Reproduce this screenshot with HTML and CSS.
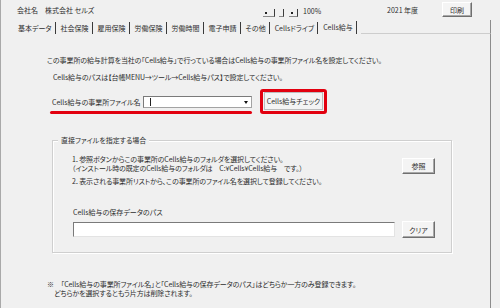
FILE: index.html
```html
<!DOCTYPE html>
<html lang="ja">
<head>
<meta charset="utf-8">
<link rel="stylesheet" href="styles.css">
</head>
<body>
<div class="window">
  <div class="topbar">
    <div class="company"><span>会社名</span><span>株式会社 セルズ</span></div>
    <div class="spin">
      <span class="spin-btn spin-a"><i class="dot"></i></span>
      <span class="spin-btn spin-b"></span>
      <span class="spin-btn spin-c"><i class="dot"></i></span>
    </div>
    <div class="zoom-val">100%</div>
    <div class="year">2021 年度</div>
    <button class="btn print">印刷</button>
  </div>
  <div class="tabrow">
    <span class="tab">基本データ</span>
    <span class="tab">社会保険</span>
    <span class="tab">雇用保険</span>
    <span class="tab">労働保険</span>
    <span class="tab">労働時間</span>
    <span class="tab">電子申請</span>
    <span class="tab">その他</span>
    <span class="tab">Cellsドライブ</span>
    <span class="tab tab-active">Cells給与</span>
    <span class="tab-fill"></span>
  </div>
  <div class="content">
    <p class="msg msg1">この事業所の給与計算を当社の「Cells給与」で行っている場合はCells給与の事業所ファイル名を設定してください。</p>
    <p class="msg msg2">Cells給与のパスは【台帳MENU→ツール→Cells給与パス】で設定してください。</p>
    <div class="file-row">
      <div class="file-field">
        <div class="file-line">
          <span class="file-label">Cells給与の事業所ファイル名</span>
          <div class="combo"><span class="caret"></span><span class="combo-arrow"></span></div>
        </div>
        <div class="red-line"></div>
      </div>
      <div class="red-box"><button class="btn check">Cells給与チェック</button></div>
    </div>
    <fieldset class="group">
      <legend>直接ファイルを指定する場合</legend>
      <div class="group-body">
        <div class="step-row">
          <div class="steps">
            <div>1．参照ボタンからこの事業所のCells給与のフォルダを選択してください。</div>
            <div>（インストール時の既定のCells給与のフォルダは　C:¥Cells¥Cells給与　です。）</div>
            <div class="step2">2．表示される事業所リストから、この事業所のファイル名を選択して登録してください。</div>
          </div>
          <button class="btn ref">参照</button>
        </div>
        <div class="path-label">Cells給与の保存データのパス</div>
        <div class="path-row">
          <div class="path-input"></div>
          <button class="btn clear">クリア</button>
        </div>
      </div>
    </fieldset>
    <div class="note">
      <div class="note-1">※　「Cells給与の事業所ファイル名」と「Cells給与の保存データのパス」はどちらか一方のみ登録できます。</div>
      <div class="note-2">どちらかを選択するともう片方は削除されます。</div>
    </div>
  </div>
</div>
</body>
</html>
```

FILE: styles.css
```css
* { box-sizing: border-box; }
html, body { margin: 0; padding: 0; }
body {
  width: 500px;
  height: 308px;
  overflow: hidden;
  background: #f0f0f0;
  font-family: "Noto Sans CJK JP", "Noto Sans", sans-serif;
  font-size: 7px;
  color: #2e2e2e;
  font-feature-settings: "palt";
}
.window {
  width: 500px;
  height: 308px;
  border-left: 1px solid #a9a9a9;
  display: flex;
  flex-direction: column;
}

/* top bar */
.topbar {
  height: 20px;
  flex: none;
  display: flex;
  align-items: center;
}
.company {
  width: 262px;
  flex: none;
  padding-left: 16px;
  display: flex;
  gap: 7px;
  line-height: 10px;
}
.spin {
  width: 40px;
  flex: none;
  height: 8px;
  align-self: flex-start;
  margin-top: 9px;
  display: flex;
  align-items: stretch;
}
.spin-btn {
  display: flex;
  align-items: center;
  border-right: 1px solid #3c3c3c;
  border-bottom: 1px solid #8a8a8a;
}
.spin-a { width: 12px; padding-left: 2px; }
.spin-b { width: 5px; margin-left: 4px; }
.spin-c { width: 9px; margin-left: 5px; padding-left: 2px; }
.dot { width: 2px; height: 2px; background: #222; display: block; }
.zoom-val { width: 84px; flex: none; line-height: 10px; margin-top: 2px; }
.year { width: 55px; flex: none; line-height: 10px; }
.btn {
  font: inherit;
  color: inherit;
  margin: 0;
  padding: 0;
  background: #f4f4f4;
  border: 1px solid;
  border-color: #ffffff #6f6f6f #6f6f6f #ffffff;
  box-shadow: inset -1px -1px 0 #a8a8a8;
  display: flex;
  align-items: center;
  justify-content: center;
  white-space: nowrap;
}
.print { width: 30px; height: 15px; margin-top: -1px; }

/* tabs */
.tabrow {
  height: 14px;
  flex: none;
  display: flex;
  align-items: flex-start;
  padding-left: 12px;
}
.tab {
  height: 12px;
  margin-top: 2px;
  padding: 1px 3px 0 5px;
  line-height: 10px;
  border-right: 1px solid #3a3a3a;
  white-space: nowrap;
}
.tab-active { margin-top: 1px; height: 13px; padding-top: 1px; }
.tab-fill {
  flex: 1;
  height: 14px;
  margin-left: 4px;
  margin-right: 9px;
  border-bottom: 1px solid #cdcdcd;
  border-right: 1px solid #8c8c8c;
}

/* content */
.content {
  flex: 1;
  margin-right: 9px;
  border-right: 1px solid #8c8c8c;
}
.msg { margin: 0; line-height: 10px; white-space: nowrap; letter-spacing: -0.1px; }
.msg1 { margin: 21px 0 0 46px; }
.msg2 { margin: 7px 0 0 52px; }

.file-row {
  display: flex;
  align-items: flex-start;
  margin: 7px 0 0 49px;
}
.file-field { width: 202px; padding-top: 7px; }
.file-line { display: flex; align-items: center; height: 12px; }
.file-label { width: 93px; flex: none; padding-left: 2px; line-height: 10px; white-space: nowrap; }
.combo {
  width: 109px;
  height: 12px;
  background: #fff;
  border: 1px solid #a3a3a3;
  border-top-color: #7a7a7a;
  border-left-color: #7a7a7a;
  display: flex;
  align-items: center;
  justify-content: space-between;
  padding: 0 3px 0 6px;
}
.caret { width: 1px; height: 8px; background: #222; }
.combo-arrow {
  width: 0;
  height: 0;
  border-left: 2.5px solid transparent;
  border-right: 2.5px solid transparent;
  border-top: 3px solid #111;
}
.red-line {
  height: 3px;
  margin-top: 3px;
  background: #e2000f;
  border-radius: 2px;
}
.red-box {
  margin-left: 8px;
  border: 3px solid #e2000f;
  border-radius: 3px;
  padding: 0 1px 1px;
  background: #f0f0f0;
}
.check {
  width: 59px;
  height: 18px;
  background: #f4f4f4;
  border: 1px solid #bdbdbd;
  box-shadow: none;
}

/* group */
.group {
  margin: 21px 0 0 51px;
  width: 400px;
  padding: 0;
  min-width: 0;
  border: 1px solid #cfcfcf;
  box-shadow: inset 1px 1px 0 #ffffff, 1px 1px 0 #ffffff;
}
.group legend {
  margin-left: 5px;
  padding: 0 3px;
  line-height: 10px;
  height: 10px;
  background: #f0f0f0;
}
.group-body { padding: 0 16px 14px 19px; }
.step-row { display: flex; justify-content: space-between; align-items: flex-start; margin-top: 10px; }
.steps { line-height: 9px; white-space: nowrap; letter-spacing: -0.1px; }
.step2 { margin-top: 4px; }
.ref { width: 33px; height: 16px; margin-top: 3px; }
.path-label { margin: 21px 0 0 1px; line-height: 10px; }
.path-row { display: flex; justify-content: space-between; align-items: flex-start; margin-top: 4px; }
.path-input {
  width: 322px;
  height: 15px;
  margin: 1px 0 0 1px;
  background: #fff;
  border: 1px solid #e3e3e3;
  border-top-color: #7a7a7a;
  border-left-color: #7a7a7a;
}
.clear { width: 33px; height: 17px; }

/* note */
.note { margin: 27px 0 0 46px; line-height: 9px; white-space: nowrap; letter-spacing: -0.1px; }
.note-2 { margin-left: 7px; }
```
